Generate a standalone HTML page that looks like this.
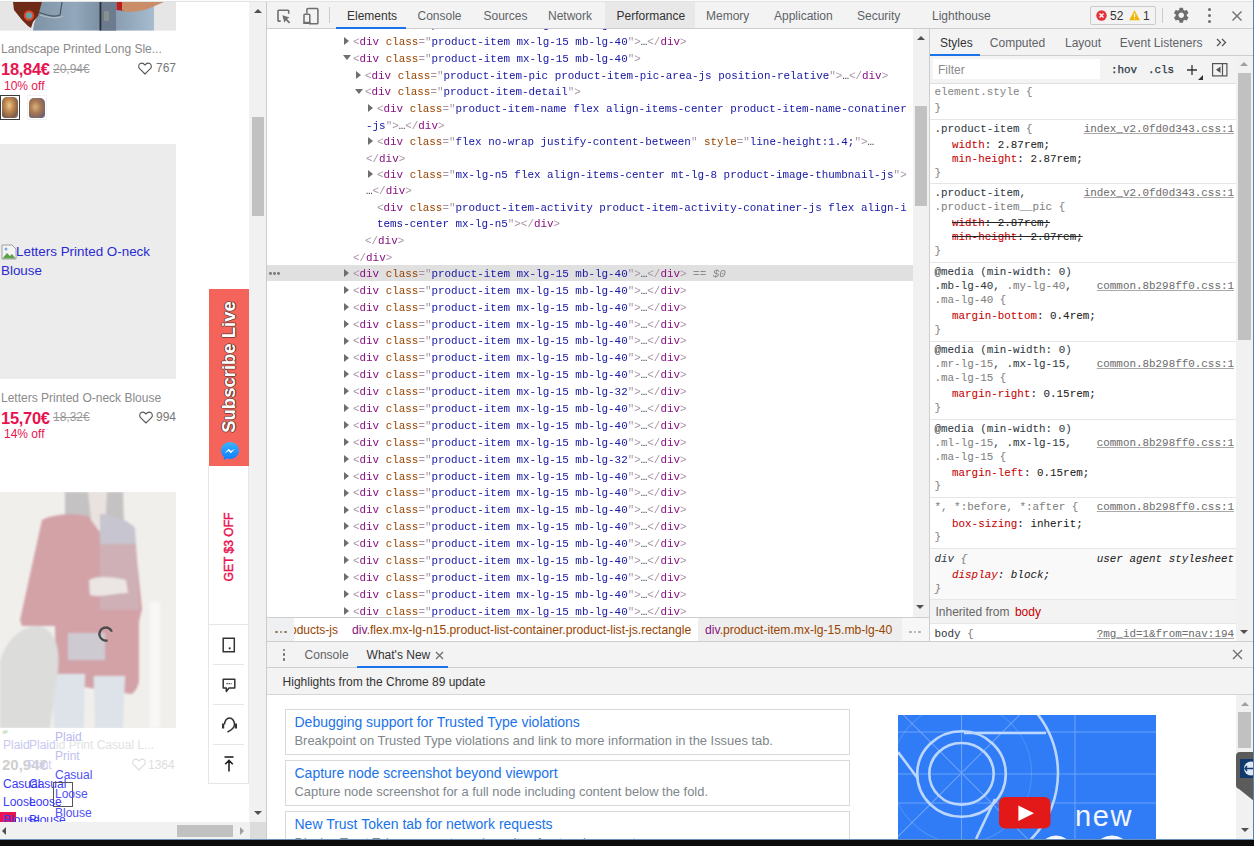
<!DOCTYPE html><html><head><meta charset="utf-8"><style>
html,body{margin:0;padding:0}
body{width:1254px;height:846px;overflow:hidden;position:relative;background:#fff;font-family:'Liberation Sans', sans-serif;}
.m{font-family:'Liberation Mono', monospace;font-size:10.9px;-webkit-text-stroke:0.05px currentColor}
.m .r, .m.r{font-size:11.4px;transform:scaleX(0.9566);transform-origin:0 50%;-webkit-text-stroke:0.02px currentColor}
.s{font-family:'Liberation Sans', sans-serif;}
.a{position:absolute;}
</style></head><body><div class="a" style="left:0;top:0;width:266px;height:846px;overflow:hidden;background:#fff"><svg class="a" style="left:0;top:2px" width="176" height="29" viewBox="0 0 176 29"><rect width="176" height="28.6" fill="#e6e6e6"/><defs><linearGradient id="jg" x1="0" x2="1"><stop offset="0" stop-color="#7f93a6"/><stop offset="0.35" stop-color="#93a8bc"/><stop offset="0.55" stop-color="#7d90a4"/><stop offset="1" stop-color="#a7bccf"/></linearGradient></defs><path d="M42 0 H154 V28.6 H33 L34 22 Z" fill="url(#jg)"/><path d="M38 10 C48 14 56 15 60 13 L62 0" fill="none" stroke="#4a5560" stroke-width="1.2"/><path d="M40 13 C50 16 58 17 63 14" fill="none" stroke="#c0ccd6" stroke-width="0.8"/><rect x="99.5" y="0" width="2" height="28.6" fill="#2a3038"/><rect x="102" y="0" width="14" height="28.6" fill="#6d7b8e"/><rect x="104" y="9" width="5" height="10" fill="#9aa08a" opacity="0.6"/><path d="M13 0 H42 L38 14 L33 20 L31 26 L28 24 L22 18 L14 8 Z" fill="#6e2a16"/><circle cx="29" cy="13.5" r="4.2" fill="#6aa0a8" stroke="#e0452a" stroke-width="2"/><path d="M116.5 0 H124.5 V9 L116.5 8 Z" fill="#b82020"/><path d="M122 0 H164 L150 6 C142 9 134 10 126 10 L122 8 Z" fill="#c98e68"/></svg><div style="position:absolute;left:1px;top:41.00px;line-height:16px;white-space:pre;font-size:12px;color:#8a8a8a">Landscape Printed Long Sle...</div><div style="position:absolute;left:1px;top:61.00px;line-height:16px;white-space:pre;font-size:16.5px;font-weight:bold;color:#e8134f;letter-spacing:-0.3px">18,84€</div><div style="position:absolute;left:53px;top:61.00px;line-height:16px;white-space:pre;font-size:12px;color:#9a9a9a;text-decoration:line-through">20,94€</div><div style="position:absolute;left:156px;top:60.00px;line-height:16px;white-space:pre;font-size:12px;color:#777">767</div><div style="position:absolute;left:4px;top:77.50px;line-height:16px;white-space:pre;font-size:12px;color:#e8134f">10% off</div><div style="position:absolute;left:0px;top:95px;width:20px;height:24.5px;border:1px solid #3a3a3a;box-sizing:border-box;background:#fff"></div><div style="position:absolute;left:2px;top:97px;width:16px;height:20.5px;border-radius:5px 5px 3px 3px;background:radial-gradient(ellipse at 45% 40%,#e8c890 0,#c08850 35%,#7a5a48 75%,#9aa0b8 100%)"></div><div style="position:absolute;left:27px;top:95px;width:20px;height:24.5px;border:1px solid #f2f2f2;box-sizing:border-box;background:#fff"></div><div style="position:absolute;left:29px;top:97.5px;width:16px;height:20px;border-radius:5px 5px 3px 3px;background:radial-gradient(ellipse at 40% 45%,#d8b080 0,#a87850 40%,#6e6070 80%,#b0a8c8 100%)"></div><div style="position:absolute;left:0px;top:144px;width:176px;height:235px;background:#ececec"></div><div style="position:absolute;left:16px;top:244.00px;line-height:16px;white-space:pre;font-size:13.4px;color:#2a2ad0">Letters Printed O-neck</div><div style="position:absolute;left:1px;top:263.00px;line-height:16px;white-space:pre;font-size:13.4px;color:#2a2ad0">Blouse</div><div style="position:absolute;left:1px;top:390.00px;line-height:16px;white-space:pre;font-size:12px;color:#8a8a8a">Letters Printed O-neck Blouse</div><div style="position:absolute;left:1px;top:409.50px;line-height:16px;white-space:pre;font-size:16.5px;font-weight:bold;color:#e8134f;letter-spacing:-0.3px">15,70€</div><div style="position:absolute;left:53px;top:409.00px;line-height:16px;white-space:pre;font-size:12px;color:#9a9a9a;text-decoration:line-through">18,32€</div><div style="position:absolute;left:156px;top:409.00px;line-height:16px;white-space:pre;font-size:12px;color:#777">994</div><div style="position:absolute;left:4px;top:425.50px;line-height:16px;white-space:pre;font-size:12px;color:#e8134f">14% off</div><div style="position:absolute;left:0px;top:492px;width:176px;height:236px;background:#eeeeec"></div><div style="position:absolute;left:209px;top:289px;width:40px;height:178px;background:#f4645a"></div><div style="position:absolute;left:208px;top:466px;width:41px;height:318px;background:#fff;border:1px solid #e6e6e6;border-top:none;box-sizing:border-box"></div><div style="position:absolute;left:209px;top:624px;width:40px;height:1px;background:#e6e6e6"></div><div style="position:absolute;left:213px;top:664px;width:31px;height:1px;background:#e6e6e6"></div><div style="position:absolute;left:213px;top:704px;width:31px;height:1px;background:#e6e6e6"></div><div style="position:absolute;left:213px;top:744px;width:31px;height:1px;background:#e6e6e6"></div><svg class="a" style="left:138px;top:62px" width="14" height="13" viewBox="0 0 14 13"><path d="M7 12 L1.6 6.6 C0.2 5.2 0.4 2.6 2.2 1.6 C3.8 0.7 5.6 1.2 7 3 C8.4 1.2 10.2 0.7 11.8 1.6 C13.6 2.6 13.8 5.2 12.4 6.6 Z" fill="none" stroke="#555" stroke-width="1.1"/></svg><svg class="a" style="left:138.5px;top:410.5px" width="14" height="13" viewBox="0 0 14 13"><path d="M7 12 L1.6 6.6 C0.2 5.2 0.4 2.6 2.2 1.6 C3.8 0.7 5.6 1.2 7 3 C8.4 1.2 10.2 0.7 11.8 1.6 C13.6 2.6 13.8 5.2 12.4 6.6 Z" fill="none" stroke="#555" stroke-width="1.1"/></svg><svg class="a" style="left:1px;top:244px" width="16" height="16" viewBox="0 0 16 16"><path d="M1 1 H11 L15 5 V15 H1 Z" fill="#f4f4f4" stroke="#a0a0a0" stroke-width="1"/><path d="M1.5 14.5 L6 9 L9 12 L11 10 L14.5 14.5 Z" fill="#5aa04a"/><circle cx="5" cy="5" r="1.5" fill="#7aaee0"/></svg><div class="a" style="left:228.8px;top:367px;width:0;height:0"><div style="position:absolute;left:-70px;top:-10px;width:140px;height:20px;line-height:20px;text-align:center;transform:rotate(-90deg);font-size:18.5px;font-weight:bold;color:#fff;white-space:pre;text-shadow:0.7px 0 0 #6a3a30,-0.7px 0 0 #6a3a30,0 0.7px 0 #6a3a30,0 -0.7px 0 #6a3a30">Subscribe Live</div></div><svg class="a" style="left:219.5px;top:440.5px" width="20" height="20" viewBox="0 0 20 20"><defs><linearGradient id="mg" x1="0" y1="1" x2="0" y2="0"><stop offset="0" stop-color="#0a7cff"/><stop offset="1" stop-color="#3cb4ff"/></linearGradient></defs><path d="M10 1 C4.9 1 1 4.8 1 9.6 C1 12.2 2.1 14.4 3.9 15.9 V19 L6.9 17.4 C7.9 17.7 8.9 17.9 10 17.9 C15.1 17.9 19 14.1 19 9.4 C19 4.7 15.1 1 10 1 Z" fill="url(#mg)"/><path d="M4.6 12.2 L8.8 7.7 L10.9 9.9 L15 7.7 L10.8 12.2 L8.7 10 Z" fill="#fff"/></svg><div class="a" style="left:229px;top:546.5px;width:0;height:0"><div style="position:absolute;left:-50px;top:-9px;width:100px;height:18px;line-height:18px;text-align:center;transform:rotate(-90deg);font-size:12.1px;color:#e8134f;white-space:pre;-webkit-text-stroke:0.45px #e8134f">GET $3 OFF</div></div><svg class="a" style="left:222px;top:636.5px" width="14" height="16" viewBox="0 0 14 16"><path d="M1.2 1.2 H12.3 V14.8 H1.2 Z" fill="none" stroke="#333" stroke-width="1.5"/><circle cx="7.7" cy="11.3" r="1.1" fill="#333"/></svg><svg class="a" style="left:222px;top:677.5px" width="14" height="15" viewBox="0 0 14 15"><path d="M1.2 1.2 H12.8 V10 H7 L4.3 13.5 V10 H1.2 Z" fill="none" stroke="#333" stroke-width="1.5" stroke-linejoin="round"/><path d="M4.5 5.6 H9.5" stroke="#333" stroke-width="1.2" stroke-dasharray="1.2 0.9"/></svg><svg class="a" style="left:220.5px;top:715.5px" width="17" height="17" viewBox="0 0 17 17"><path d="M3.5 8.5 C3.5 5 5.6 2 8.5 2 C11.4 2 13.5 5 13.5 8.5 C13.5 11.5 11.5 13.5 6.5 16" fill="none" stroke="#333" stroke-width="1.5"/><rect x="1" y="7.5" width="2.2" height="5" fill="#333"/><rect x="13.8" y="7.5" width="2.2" height="5" fill="#333"/></svg><svg class="a" style="left:223.5px;top:756px" width="10" height="16" viewBox="0 0 10 16"><path d="M0.5 1 H9.5" stroke="#222" stroke-width="1.6"/><path d="M5 15.5 V4.5 M1.2 8.3 L5 4.5 L8.8 8.3" fill="none" stroke="#222" stroke-width="1.6"/></svg><svg class="a" style="left:0;top:492px" width="176" height="236" viewBox="0 0 176 236"><defs><filter id="pb" x="-5%" y="-5%" width="110%" height="110%"><feGaussianBlur stdDeviation="1"/></filter></defs><rect width="176" height="236" fill="#f0efec"/><g filter="url(#pb)"><rect x="150" y="110" width="10" height="126" fill="#f7f7f6"/><path d="M65 0 H123 L124 30 L108 28 L90 28 L65 24 Z" fill="#c4c2c2"/><path d="M88 0 H107 L105 36 L92 36 Z" fill="#e9e2df"/><path d="M42 28 C50 23 70 20 88 24 L100 40 L106 23 C118 24 130 30 134 38 L142 117 L139 130 L139 190 C137 198 133 202 131 202 L90 196 L56 191 L55 134 L22 134 L20 128 Z" fill="#d3a2a7"/><path d="M100 22 C112 22 128 28 135 36 L136 52 L100 52 Z" fill="#c7c5cf"/><path d="M100 52 L136 52 L139 118 L100 118 Z" fill="#ceb0b6"/><path d="M68 141 H105 V168 H68 Z" fill="#cdcad1"/><path d="M89 88 C96 84 110 84 126 88 L128 101 C114 101 102 106 90 103 Z" fill="#ebe5e3"/><path d="M52.5 182 H85 L84 236 H54 Z M93.7 184 H125 L123 236 H95 Z" fill="#dde3e9"/><path d="M0 170 C6 148 20 134 40 134 C56 138 60 158 58 178 L50 236 H0 Z" fill="#dcdcdb"/></g></svg><svg class="a" style="left:96px;top:624px" width="20" height="20" viewBox="0 0 20 20"><path d="M15.9 7.6 A6.5 6.5 0 1 0 11.6 16.3" fill="none" stroke="#4a4a4a" stroke-width="2.3"/></svg><div class="a" style="left:0;top:727px;width:176px;height:95px;overflow:hidden;font-size:12px"><div style="position:absolute;left:2px;top:-3.00px;line-height:16px;white-space:pre;font-size:8px;color:#cfe3c4">▰</div><div style="position:absolute;left:3px;top:10.00px;line-height:16px;white-space:pre;color:#c9c9f0">Plaid</div><div style="position:absolute;left:29px;top:10.00px;line-height:16px;white-space:pre;color:#c9c9f0">Plaid</div><div style="position:absolute;left:56px;top:10.00px;line-height:16px;white-space:pre;color:#e2e2e2">id Print Casual L...</div><div style="position:absolute;left:55px;top:1.50px;line-height:16px;white-space:pre;color:#b8b8f0">Plaid</div><div style="position:absolute;left:55px;top:20.50px;line-height:16px;white-space:pre;color:#c0c0f0">Print</div><div style="position:absolute;left:2px;top:29.50px;line-height:16px;white-space:pre;font-size:15px;font-weight:bold;color:#cfcfcf">20,94€</div><div style="position:absolute;left:27px;top:29.50px;line-height:16px;white-space:pre;color:#d0d0f4">Print</div><svg class="a" style="left:132px;top:30.5px" width="14" height="13" viewBox="0 0 14 13"><path d="M7 12 L1.6 6.6 C0.2 5.2 0.4 2.6 2.2 1.6 C3.8 0.7 5.6 1.2 7 3 C8.4 1.2 10.2 0.7 11.8 1.6 C13.6 2.6 13.8 5.2 12.4 6.6 Z" fill="none" stroke="#dcdcdc" stroke-width="1.1"/></svg><div style="position:absolute;left:148px;top:29.50px;line-height:16px;white-space:pre;color:#dedede">1364</div><div style="position:absolute;left:55px;top:39.50px;line-height:16px;white-space:pre;color:#5050f5">Casual</div><div style="position:absolute;left:3px;top:48.50px;line-height:16px;white-space:pre;color:#3a3af5">Casual</div><div style="position:absolute;left:29px;top:48.50px;line-height:16px;white-space:pre;color:#3a3af5">Casual</div><div style="position:absolute;left:53px;top:55px;width:19.5px;height:25px;border:1px solid #555;box-sizing:border-box"></div><div style="position:absolute;left:55px;top:58.50px;line-height:16px;white-space:pre;color:#5050f5">Loose</div><div style="position:absolute;left:3px;top:67.00px;line-height:16px;white-space:pre;color:#3a3af5">Loose</div><div style="position:absolute;left:29px;top:67.00px;line-height:16px;white-space:pre;color:#3a3af5">Loose</div><div style="position:absolute;left:55px;top:77.50px;line-height:16px;white-space:pre;color:#5050f5">Blouse</div><div style="position:absolute;left:0px;top:84.5px;width:16px;height:11px;background:#e8134f"></div><div style="position:absolute;left:3px;top:85.00px;line-height:16px;white-space:pre;color:#3a3af5">Blouse</div><div style="position:absolute;left:29px;top:85.00px;line-height:16px;white-space:pre;color:#3a3af5">Blouse</div></div><div style="position:absolute;left:249px;top:0px;width:17px;height:846px;background:#f1f1f1"></div><div style="position:absolute;left:252px;top:117px;width:12px;height:99px;background:#c1c1c1"></div><div class="a" style="left:253.5px;top:8.7px;width:0;height:0;border-bottom:4.5px solid #505050;border-left:4.5px solid transparent;border-right:4.5px solid transparent"></div><div class="a" style="left:253.5px;top:811px;width:0;height:0;border-top:4.5px solid #505050;border-left:4.5px solid transparent;border-right:4.5px solid transparent"></div><div style="position:absolute;left:0px;top:822px;width:250px;height:17px;background:#f1f1f1"></div><div style="position:absolute;left:177px;top:824.5px;width:55.5px;height:12.3px;background:#c1c1c1"></div><div style="position:absolute;left:250px;top:822px;width:16px;height:17px;background:#dcdcdc"></div><div class="a" style="left:1.5px;top:826.5px;width:0;height:0;border-right:4.5px solid #505050;border-top:4.5px solid transparent;border-bottom:4.5px solid transparent"></div><div class="a" style="left:239.5px;top:826.5px;width:0;height:0;border-left:4.5px solid #a0a0a0;border-top:4.5px solid transparent;border-bottom:4.5px solid transparent"></div></div><div style="position:absolute;left:266px;top:0px;width:1px;height:846px;background:#cbcbcb"></div><div style="position:absolute;left:267px;top:0px;width:987px;height:28px;background:#f3f3f3"></div><div style="position:absolute;left:267px;top:28px;width:987px;height:1px;background:#cdcdcd"></div><div style="position:absolute;left:605px;top:0px;width:90px;height:28px;background:#e8e8e8"></div><div style="position:absolute;left:336px;top:27px;width:70px;height:2px;background:#1a73e8"></div><div style="position:absolute;left:347px;top:7.50px;line-height:16px;white-space:pre;font-size:12px;color:#333">Elements</div><div style="position:absolute;left:417.5px;top:7.50px;line-height:16px;white-space:pre;font-size:12px;color:#5f6368">Console</div><div style="position:absolute;left:483.5px;top:7.50px;line-height:16px;white-space:pre;font-size:12px;color:#5f6368">Sources</div><div style="position:absolute;left:548px;top:7.50px;line-height:16px;white-space:pre;font-size:12px;color:#5f6368">Network</div><div style="position:absolute;left:616.5px;top:7.50px;line-height:16px;white-space:pre;font-size:12px;color:#333">Performance</div><div style="position:absolute;left:706px;top:7.50px;line-height:16px;white-space:pre;font-size:12px;color:#5f6368">Memory</div><div style="position:absolute;left:774px;top:7.50px;line-height:16px;white-space:pre;font-size:12px;color:#5f6368">Application</div><div style="position:absolute;left:857px;top:7.50px;line-height:16px;white-space:pre;font-size:12px;color:#5f6368">Security</div><div style="position:absolute;left:932px;top:7.50px;line-height:16px;white-space:pre;font-size:12px;color:#5f6368">Lighthouse</div><div style="position:absolute;left:267px;top:29px;width:646px;height:588px;background:#fff"></div><div class="a m" style="left:267px;top:29px;width:646px;height:588px;overflow:hidden"><div style="position:absolute;left:0px;top:236.0px;width:646px;height:16.4px;background:#e0e0e0"></div><div class="a" style="left:2.1px;top:243.1px;width:2.8px;height:2.8px;border-radius:50%;background:#7a7a7a"></div><div class="a" style="left:6.1px;top:243.1px;width:2.8px;height:2.8px;border-radius:50%;background:#7a7a7a"></div><div class="a" style="left:10.1px;top:243.1px;width:2.8px;height:2.8px;border-radius:50%;background:#7a7a7a"></div><div class="r" style="position:absolute;left:85.90px;top:-11.80px;line-height:16px;white-space:pre"><span style="color:#a894a6;">&lt;</span><span style="color:#881280;">div</span> <span style="color:#994500;">class</span><span style="color:#a894a6;">=&quot;</span><span style="color:#1a1aa6;">product-item mx-lg-15 mb-lg-40</span><span style="color:#a894a6;">&quot;</span><span style="color:#a894a6;">&gt;</span><span style="color:#303942;">…</span><span style="color:#a894a6;">&lt;/</span><span style="color:#881280;">div</span><span style="color:#a894a6;">&gt;</span></div><div class="a" style="left:76.8px;top:7.9px;width:0;height:0;border-left:5.5px solid #6e6e6e;border-top:4.5px solid transparent;border-bottom:4.5px solid transparent"></div><div class="r" style="position:absolute;left:85.90px;top:4.70px;line-height:16px;white-space:pre"><span style="color:#a894a6;">&lt;</span><span style="color:#881280;">div</span> <span style="color:#994500;">class</span><span style="color:#a894a6;">=&quot;</span><span style="color:#1a1aa6;">product-item mx-lg-15 mb-lg-40</span><span style="color:#a894a6;">&quot;</span><span style="color:#a894a6;">&gt;</span><span style="color:#303942;">…</span><span style="color:#a894a6;">&lt;/</span><span style="color:#881280;">div</span><span style="color:#a894a6;">&gt;</span></div><div class="a" style="left:76.0px;top:26.4px;width:0;height:0;border-top:5.5px solid #6e6e6e;border-left:4.5px solid transparent;border-right:4.5px solid transparent"></div><div class="r" style="position:absolute;left:85.90px;top:21.70px;line-height:16px;white-space:pre"><span style="color:#a894a6;">&lt;</span><span style="color:#881280;">div</span> <span style="color:#994500;">class</span><span style="color:#a894a6;">=&quot;</span><span style="color:#1a1aa6;">product-item mx-lg-15 mb-lg-40</span><span style="color:#a894a6;">&quot;</span><span style="color:#a894a6;">&gt;</span></div><div class="a" style="left:88.8px;top:41.7px;width:0;height:0;border-left:5.5px solid #6e6e6e;border-top:4.5px solid transparent;border-bottom:4.5px solid transparent"></div><div class="r" style="position:absolute;left:97.90px;top:38.50px;line-height:16px;white-space:pre"><span style="color:#a894a6;">&lt;</span><span style="color:#881280;">div</span> <span style="color:#994500;">class</span><span style="color:#a894a6;">=&quot;</span><span style="color:#1a1aa6;">product-item-pic product-item-pic-area-js position-relative</span><span style="color:#a894a6;">&quot;</span><span style="color:#a894a6;">&gt;</span><span style="color:#303942;">…</span><span style="color:#a894a6;">&lt;/</span><span style="color:#881280;">div</span><span style="color:#a894a6;">&gt;</span></div><div class="a" style="left:88.0px;top:59.9px;width:0;height:0;border-top:5.5px solid #6e6e6e;border-left:4.5px solid transparent;border-right:4.5px solid transparent"></div><div class="r" style="position:absolute;left:97.90px;top:55.20px;line-height:16px;white-space:pre"><span style="color:#a894a6;">&lt;</span><span style="color:#881280;">div</span> <span style="color:#994500;">class</span><span style="color:#a894a6;">=&quot;</span><span style="color:#1a1aa6;">product-item-detail</span><span style="color:#a894a6;">&quot;</span><span style="color:#a894a6;">&gt;</span></div><div class="a" style="left:100.8px;top:75.1px;width:0;height:0;border-left:5.5px solid #6e6e6e;border-top:4.5px solid transparent;border-bottom:4.5px solid transparent"></div><div class="r" style="position:absolute;left:109.90px;top:71.90px;line-height:16px;white-space:pre"><span style="color:#a894a6;">&lt;</span><span style="color:#881280;">div</span> <span style="color:#994500;">class</span><span style="color:#a894a6;">=&quot;</span><span style="color:#1a1aa6;">product-item-name flex align-items-center product-item-name-conatiner</span></div><div class="r" style="position:absolute;left:98.50px;top:88.60px;line-height:16px;white-space:pre"><span style="color:#1a1aa6;">-js</span><span style="color:#a894a6;">&quot;&gt;</span><span style="color:#303942;">…</span><span style="color:#a894a6;">&lt;/</span><span style="color:#881280;">div</span><span style="color:#a894a6;">&gt;</span></div><div class="a" style="left:100.8px;top:108.2px;width:0;height:0;border-left:5.5px solid #6e6e6e;border-top:4.5px solid transparent;border-bottom:4.5px solid transparent"></div><div class="r" style="position:absolute;left:109.90px;top:105.00px;line-height:16px;white-space:pre"><span style="color:#a894a6;">&lt;</span><span style="color:#881280;">div</span> <span style="color:#994500;">class</span><span style="color:#a894a6;">=&quot;</span><span style="color:#1a1aa6;">flex no-wrap justify-content-between</span><span style="color:#a894a6;">&quot;</span> <span style="color:#994500;">style</span><span style="color:#a894a6;">=&quot;</span><span style="color:#1a1aa6;">line-height:1.4;</span><span style="color:#a894a6;">&quot;</span><span style="color:#a894a6;">&gt;</span><span style="color:#303942;">…</span></div><div class="r" style="position:absolute;left:98.50px;top:121.50px;line-height:16px;white-space:pre"><span style="color:#a894a6;">&lt;/</span><span style="color:#881280;">div</span><span style="color:#a894a6;">&gt;</span></div><div class="a" style="left:100.8px;top:141.1px;width:0;height:0;border-left:5.5px solid #6e6e6e;border-top:4.5px solid transparent;border-bottom:4.5px solid transparent"></div><div class="r" style="position:absolute;left:109.90px;top:137.90px;line-height:16px;white-space:pre"><span style="color:#a894a6;">&lt;</span><span style="color:#881280;">div</span> <span style="color:#994500;">class</span><span style="color:#a894a6;">=&quot;</span><span style="color:#1a1aa6;">mx-lg-n5 flex align-items-center mt-lg-8 product-image-thumbnail-js</span><span style="color:#a894a6;">&quot;</span><span style="color:#a894a6;">&gt;</span></div><div class="r" style="position:absolute;left:98.50px;top:154.30px;line-height:16px;white-space:pre"><span style="color:#303942;">…</span><span style="color:#a894a6;">&lt;/</span><span style="color:#881280;">div</span><span style="color:#a894a6;">&gt;</span></div><div class="r" style="position:absolute;left:109.90px;top:170.90px;line-height:16px;white-space:pre"><span style="color:#a894a6;">&lt;</span><span style="color:#881280;">div</span> <span style="color:#994500;">class</span><span style="color:#a894a6;">=&quot;</span><span style="color:#1a1aa6;">product-item-activity product-item-activity-conatiner-js flex align-i</span></div><div class="r" style="position:absolute;left:110.40px;top:187.10px;line-height:16px;white-space:pre"><span style="color:#1a1aa6;">tems-center mx-lg-n5</span><span style="color:#a894a6;">&quot;&gt;</span><span style="color:#a894a6;">&lt;/</span><span style="color:#881280;">div</span><span style="color:#a894a6;">&gt;</span></div><div class="r" style="position:absolute;left:97.90px;top:203.70px;line-height:16px;white-space:pre"><span style="color:#a894a6;">&lt;/</span><span style="color:#881280;">div</span><span style="color:#a894a6;">&gt;</span></div><div class="r" style="position:absolute;left:85.90px;top:220.50px;line-height:16px;white-space:pre"><span style="color:#a894a6;">&lt;/</span><span style="color:#881280;">div</span><span style="color:#a894a6;">&gt;</span></div><div class="a" style="left:76.8px;top:240.1px;width:0;height:0;border-left:5.5px solid #6e6e6e;border-top:4.5px solid transparent;border-bottom:4.5px solid transparent"></div><div class="r" style="position:absolute;left:85.90px;top:236.90px;line-height:16px;white-space:pre"><span style="color:#a894a6;">&lt;</span><span style="color:#881280;">div</span> <span style="color:#994500;">class</span><span style="color:#a894a6;">=&quot;</span><span style="color:#1a1aa6;">product-item mx-lg-15 mb-lg-40</span><span style="color:#a894a6;">&quot;</span><span style="color:#a894a6;">&gt;</span><span style="color:#303942;">…</span><span style="color:#a894a6;">&lt;/</span><span style="color:#881280;">div</span><span style="color:#a894a6;">&gt;</span> <span style="color:#8a8a8a;font-style:italic">== $0</span></div><div class="a" style="left:76.8px;top:257.0px;width:0;height:0;border-left:5.5px solid #6e6e6e;border-top:4.5px solid transparent;border-bottom:4.5px solid transparent"></div><div class="r" style="position:absolute;left:85.90px;top:253.78px;line-height:16px;white-space:pre"><span style="color:#a894a6;">&lt;</span><span style="color:#881280;">div</span> <span style="color:#994500;">class</span><span style="color:#a894a6;">=&quot;</span><span style="color:#1a1aa6;">product-item mx-lg-15 mb-lg-40</span><span style="color:#a894a6;">&quot;</span><span style="color:#a894a6;">&gt;</span><span style="color:#303942;">…</span><span style="color:#a894a6;">&lt;/</span><span style="color:#881280;">div</span><span style="color:#a894a6;">&gt;</span></div><div class="a" style="left:76.8px;top:273.9px;width:0;height:0;border-left:5.5px solid #6e6e6e;border-top:4.5px solid transparent;border-bottom:4.5px solid transparent"></div><div class="r" style="position:absolute;left:85.90px;top:270.67px;line-height:16px;white-space:pre"><span style="color:#a894a6;">&lt;</span><span style="color:#881280;">div</span> <span style="color:#994500;">class</span><span style="color:#a894a6;">=&quot;</span><span style="color:#1a1aa6;">product-item mx-lg-15 mb-lg-40</span><span style="color:#a894a6;">&quot;</span><span style="color:#a894a6;">&gt;</span><span style="color:#303942;">…</span><span style="color:#a894a6;">&lt;/</span><span style="color:#881280;">div</span><span style="color:#a894a6;">&gt;</span></div><div class="a" style="left:76.8px;top:290.8px;width:0;height:0;border-left:5.5px solid #6e6e6e;border-top:4.5px solid transparent;border-bottom:4.5px solid transparent"></div><div class="r" style="position:absolute;left:85.90px;top:287.56px;line-height:16px;white-space:pre"><span style="color:#a894a6;">&lt;</span><span style="color:#881280;">div</span> <span style="color:#994500;">class</span><span style="color:#a894a6;">=&quot;</span><span style="color:#1a1aa6;">product-item mx-lg-15 mb-lg-40</span><span style="color:#a894a6;">&quot;</span><span style="color:#a894a6;">&gt;</span><span style="color:#303942;">…</span><span style="color:#a894a6;">&lt;/</span><span style="color:#881280;">div</span><span style="color:#a894a6;">&gt;</span></div><div class="a" style="left:76.8px;top:307.6px;width:0;height:0;border-left:5.5px solid #6e6e6e;border-top:4.5px solid transparent;border-bottom:4.5px solid transparent"></div><div class="r" style="position:absolute;left:85.90px;top:304.44px;line-height:16px;white-space:pre"><span style="color:#a894a6;">&lt;</span><span style="color:#881280;">div</span> <span style="color:#994500;">class</span><span style="color:#a894a6;">=&quot;</span><span style="color:#1a1aa6;">product-item mx-lg-15 mb-lg-40</span><span style="color:#a894a6;">&quot;</span><span style="color:#a894a6;">&gt;</span><span style="color:#303942;">…</span><span style="color:#a894a6;">&lt;/</span><span style="color:#881280;">div</span><span style="color:#a894a6;">&gt;</span></div><div class="a" style="left:76.8px;top:324.5px;width:0;height:0;border-left:5.5px solid #6e6e6e;border-top:4.5px solid transparent;border-bottom:4.5px solid transparent"></div><div class="r" style="position:absolute;left:85.90px;top:321.32px;line-height:16px;white-space:pre"><span style="color:#a894a6;">&lt;</span><span style="color:#881280;">div</span> <span style="color:#994500;">class</span><span style="color:#a894a6;">=&quot;</span><span style="color:#1a1aa6;">product-item mx-lg-15 mb-lg-40</span><span style="color:#a894a6;">&quot;</span><span style="color:#a894a6;">&gt;</span><span style="color:#303942;">…</span><span style="color:#a894a6;">&lt;/</span><span style="color:#881280;">div</span><span style="color:#a894a6;">&gt;</span></div><div class="a" style="left:76.8px;top:341.4px;width:0;height:0;border-left:5.5px solid #6e6e6e;border-top:4.5px solid transparent;border-bottom:4.5px solid transparent"></div><div class="r" style="position:absolute;left:85.90px;top:338.21px;line-height:16px;white-space:pre"><span style="color:#a894a6;">&lt;</span><span style="color:#881280;">div</span> <span style="color:#994500;">class</span><span style="color:#a894a6;">=&quot;</span><span style="color:#1a1aa6;">product-item mx-lg-15 mb-lg-40</span><span style="color:#a894a6;">&quot;</span><span style="color:#a894a6;">&gt;</span><span style="color:#303942;">…</span><span style="color:#a894a6;">&lt;/</span><span style="color:#881280;">div</span><span style="color:#a894a6;">&gt;</span></div><div class="a" style="left:76.8px;top:358.3px;width:0;height:0;border-left:5.5px solid #6e6e6e;border-top:4.5px solid transparent;border-bottom:4.5px solid transparent"></div><div class="r" style="position:absolute;left:85.90px;top:355.09px;line-height:16px;white-space:pre"><span style="color:#a894a6;">&lt;</span><span style="color:#881280;">div</span> <span style="color:#994500;">class</span><span style="color:#a894a6;">=&quot;</span><span style="color:#1a1aa6;">product-item mx-lg-15 mb-lg-32</span><span style="color:#a894a6;">&quot;</span><span style="color:#a894a6;">&gt;</span><span style="color:#303942;">…</span><span style="color:#a894a6;">&lt;/</span><span style="color:#881280;">div</span><span style="color:#a894a6;">&gt;</span></div><div class="a" style="left:76.8px;top:375.2px;width:0;height:0;border-left:5.5px solid #6e6e6e;border-top:4.5px solid transparent;border-bottom:4.5px solid transparent"></div><div class="r" style="position:absolute;left:85.90px;top:371.98px;line-height:16px;white-space:pre"><span style="color:#a894a6;">&lt;</span><span style="color:#881280;">div</span> <span style="color:#994500;">class</span><span style="color:#a894a6;">=&quot;</span><span style="color:#1a1aa6;">product-item mx-lg-15 mb-lg-40</span><span style="color:#a894a6;">&quot;</span><span style="color:#a894a6;">&gt;</span><span style="color:#303942;">…</span><span style="color:#a894a6;">&lt;/</span><span style="color:#881280;">div</span><span style="color:#a894a6;">&gt;</span></div><div class="a" style="left:76.8px;top:392.1px;width:0;height:0;border-left:5.5px solid #6e6e6e;border-top:4.5px solid transparent;border-bottom:4.5px solid transparent"></div><div class="r" style="position:absolute;left:85.90px;top:388.86px;line-height:16px;white-space:pre"><span style="color:#a894a6;">&lt;</span><span style="color:#881280;">div</span> <span style="color:#994500;">class</span><span style="color:#a894a6;">=&quot;</span><span style="color:#1a1aa6;">product-item mx-lg-15 mb-lg-40</span><span style="color:#a894a6;">&quot;</span><span style="color:#a894a6;">&gt;</span><span style="color:#303942;">…</span><span style="color:#a894a6;">&lt;/</span><span style="color:#881280;">div</span><span style="color:#a894a6;">&gt;</span></div><div class="a" style="left:76.8px;top:408.9px;width:0;height:0;border-left:5.5px solid #6e6e6e;border-top:4.5px solid transparent;border-bottom:4.5px solid transparent"></div><div class="r" style="position:absolute;left:85.90px;top:405.75px;line-height:16px;white-space:pre"><span style="color:#a894a6;">&lt;</span><span style="color:#881280;">div</span> <span style="color:#994500;">class</span><span style="color:#a894a6;">=&quot;</span><span style="color:#1a1aa6;">product-item mx-lg-15 mb-lg-40</span><span style="color:#a894a6;">&quot;</span><span style="color:#a894a6;">&gt;</span><span style="color:#303942;">…</span><span style="color:#a894a6;">&lt;/</span><span style="color:#881280;">div</span><span style="color:#a894a6;">&gt;</span></div><div class="a" style="left:76.8px;top:425.8px;width:0;height:0;border-left:5.5px solid #6e6e6e;border-top:4.5px solid transparent;border-bottom:4.5px solid transparent"></div><div class="r" style="position:absolute;left:85.90px;top:422.63px;line-height:16px;white-space:pre"><span style="color:#a894a6;">&lt;</span><span style="color:#881280;">div</span> <span style="color:#994500;">class</span><span style="color:#a894a6;">=&quot;</span><span style="color:#1a1aa6;">product-item mx-lg-15 mb-lg-32</span><span style="color:#a894a6;">&quot;</span><span style="color:#a894a6;">&gt;</span><span style="color:#303942;">…</span><span style="color:#a894a6;">&lt;/</span><span style="color:#881280;">div</span><span style="color:#a894a6;">&gt;</span></div><div class="a" style="left:76.8px;top:442.7px;width:0;height:0;border-left:5.5px solid #6e6e6e;border-top:4.5px solid transparent;border-bottom:4.5px solid transparent"></div><div class="r" style="position:absolute;left:85.90px;top:439.52px;line-height:16px;white-space:pre"><span style="color:#a894a6;">&lt;</span><span style="color:#881280;">div</span> <span style="color:#994500;">class</span><span style="color:#a894a6;">=&quot;</span><span style="color:#1a1aa6;">product-item mx-lg-15 mb-lg-40</span><span style="color:#a894a6;">&quot;</span><span style="color:#a894a6;">&gt;</span><span style="color:#303942;">…</span><span style="color:#a894a6;">&lt;/</span><span style="color:#881280;">div</span><span style="color:#a894a6;">&gt;</span></div><div class="a" style="left:76.8px;top:459.6px;width:0;height:0;border-left:5.5px solid #6e6e6e;border-top:4.5px solid transparent;border-bottom:4.5px solid transparent"></div><div class="r" style="position:absolute;left:85.90px;top:456.41px;line-height:16px;white-space:pre"><span style="color:#a894a6;">&lt;</span><span style="color:#881280;">div</span> <span style="color:#994500;">class</span><span style="color:#a894a6;">=&quot;</span><span style="color:#1a1aa6;">product-item mx-lg-15 mb-lg-40</span><span style="color:#a894a6;">&quot;</span><span style="color:#a894a6;">&gt;</span><span style="color:#303942;">…</span><span style="color:#a894a6;">&lt;/</span><span style="color:#881280;">div</span><span style="color:#a894a6;">&gt;</span></div><div class="a" style="left:76.8px;top:476.5px;width:0;height:0;border-left:5.5px solid #6e6e6e;border-top:4.5px solid transparent;border-bottom:4.5px solid transparent"></div><div class="r" style="position:absolute;left:85.90px;top:473.29px;line-height:16px;white-space:pre"><span style="color:#a894a6;">&lt;</span><span style="color:#881280;">div</span> <span style="color:#994500;">class</span><span style="color:#a894a6;">=&quot;</span><span style="color:#1a1aa6;">product-item mx-lg-15 mb-lg-40</span><span style="color:#a894a6;">&quot;</span><span style="color:#a894a6;">&gt;</span><span style="color:#303942;">…</span><span style="color:#a894a6;">&lt;/</span><span style="color:#881280;">div</span><span style="color:#a894a6;">&gt;</span></div><div class="a" style="left:76.8px;top:493.4px;width:0;height:0;border-left:5.5px solid #6e6e6e;border-top:4.5px solid transparent;border-bottom:4.5px solid transparent"></div><div class="r" style="position:absolute;left:85.90px;top:490.18px;line-height:16px;white-space:pre"><span style="color:#a894a6;">&lt;</span><span style="color:#881280;">div</span> <span style="color:#994500;">class</span><span style="color:#a894a6;">=&quot;</span><span style="color:#1a1aa6;">product-item mx-lg-15 mb-lg-40</span><span style="color:#a894a6;">&quot;</span><span style="color:#a894a6;">&gt;</span><span style="color:#303942;">…</span><span style="color:#a894a6;">&lt;/</span><span style="color:#881280;">div</span><span style="color:#a894a6;">&gt;</span></div><div class="a" style="left:76.8px;top:510.3px;width:0;height:0;border-left:5.5px solid #6e6e6e;border-top:4.5px solid transparent;border-bottom:4.5px solid transparent"></div><div class="r" style="position:absolute;left:85.90px;top:507.06px;line-height:16px;white-space:pre"><span style="color:#a894a6;">&lt;</span><span style="color:#881280;">div</span> <span style="color:#994500;">class</span><span style="color:#a894a6;">=&quot;</span><span style="color:#1a1aa6;">product-item mx-lg-15 mb-lg-40</span><span style="color:#a894a6;">&quot;</span><span style="color:#a894a6;">&gt;</span><span style="color:#303942;">…</span><span style="color:#a894a6;">&lt;/</span><span style="color:#881280;">div</span><span style="color:#a894a6;">&gt;</span></div><div class="a" style="left:76.8px;top:527.1px;width:0;height:0;border-left:5.5px solid #6e6e6e;border-top:4.5px solid transparent;border-bottom:4.5px solid transparent"></div><div class="r" style="position:absolute;left:85.90px;top:523.95px;line-height:16px;white-space:pre"><span style="color:#a894a6;">&lt;</span><span style="color:#881280;">div</span> <span style="color:#994500;">class</span><span style="color:#a894a6;">=&quot;</span><span style="color:#1a1aa6;">product-item mx-lg-15 mb-lg-40</span><span style="color:#a894a6;">&quot;</span><span style="color:#a894a6;">&gt;</span><span style="color:#303942;">…</span><span style="color:#a894a6;">&lt;/</span><span style="color:#881280;">div</span><span style="color:#a894a6;">&gt;</span></div><div class="a" style="left:76.8px;top:544.0px;width:0;height:0;border-left:5.5px solid #6e6e6e;border-top:4.5px solid transparent;border-bottom:4.5px solid transparent"></div><div class="r" style="position:absolute;left:85.90px;top:540.83px;line-height:16px;white-space:pre"><span style="color:#a894a6;">&lt;</span><span style="color:#881280;">div</span> <span style="color:#994500;">class</span><span style="color:#a894a6;">=&quot;</span><span style="color:#1a1aa6;">product-item mx-lg-15 mb-lg-40</span><span style="color:#a894a6;">&quot;</span><span style="color:#a894a6;">&gt;</span><span style="color:#303942;">…</span><span style="color:#a894a6;">&lt;/</span><span style="color:#881280;">div</span><span style="color:#a894a6;">&gt;</span></div><div class="a" style="left:76.8px;top:560.9px;width:0;height:0;border-left:5.5px solid #6e6e6e;border-top:4.5px solid transparent;border-bottom:4.5px solid transparent"></div><div class="r" style="position:absolute;left:85.90px;top:557.72px;line-height:16px;white-space:pre"><span style="color:#a894a6;">&lt;</span><span style="color:#881280;">div</span> <span style="color:#994500;">class</span><span style="color:#a894a6;">=&quot;</span><span style="color:#1a1aa6;">product-item mx-lg-15 mb-lg-40</span><span style="color:#a894a6;">&quot;</span><span style="color:#a894a6;">&gt;</span><span style="color:#303942;">…</span><span style="color:#a894a6;">&lt;/</span><span style="color:#881280;">div</span><span style="color:#a894a6;">&gt;</span></div><div class="a" style="left:76.8px;top:577.8px;width:0;height:0;border-left:5.5px solid #6e6e6e;border-top:4.5px solid transparent;border-bottom:4.5px solid transparent"></div><div class="r" style="position:absolute;left:85.90px;top:574.60px;line-height:16px;white-space:pre"><span style="color:#a894a6;">&lt;</span><span style="color:#881280;">div</span> <span style="color:#994500;">class</span><span style="color:#a894a6;">=&quot;</span><span style="color:#1a1aa6;">product-item mx-lg-15 mb-lg-40</span><span style="color:#a894a6;">&quot;</span><span style="color:#a894a6;">&gt;</span><span style="color:#303942;">…</span><span style="color:#a894a6;">&lt;/</span><span style="color:#881280;">div</span><span style="color:#a894a6;">&gt;</span></div></div><div style="position:absolute;left:913px;top:29px;width:16px;height:588px;background:#f1f1f1"></div><div style="position:absolute;left:914.5px;top:106px;width:12.5px;height:99.5px;background:#c1c1c1"></div><div class="a" style="left:917px;top:36px;width:0;height:0;border-bottom:4px solid #505050;border-left:4px solid transparent;border-right:4px solid transparent"></div><div class="a" style="left:916px;top:605px;width:0;height:0;border-top:4px solid #505050;border-left:4px solid transparent;border-right:4px solid transparent"></div><div style="position:absolute;left:929px;top:29px;width:1px;height:612px;background:#cdcdcd"></div><div style="position:absolute;left:267px;top:617px;width:662px;height:1px;background:#cdcdcd"></div><div style="position:absolute;left:267px;top:618px;width:662px;height:23px;background:#fff"></div><div style="position:absolute;left:267px;top:618px;width:27px;height:23px;background:#eef0f2"></div><div class="a" style="left:275.3px;top:631px;width:2.4px;height:2.4px;border-radius:50%;background:#8a7a6a"></div><div class="a" style="left:279.8px;top:631px;width:2.4px;height:2.4px;border-radius:50%;background:#8a7a6a"></div><div class="a" style="left:284.3px;top:631px;width:2.4px;height:2.4px;border-radius:50%;background:#8a7a6a"></div><div class="a" style="left:294px;top:618px;width:50px;height:23px;overflow:hidden"><div style="position:absolute;left:-4px;top:4px;line-height:16px;font-size:12px;color:#994500;white-space:pre">oducts-js</div></div><div style="position:absolute;left:352px;top:622.00px;line-height:16px;white-space:pre;font-size:12.15px"><span style="color:#881280;">div</span><span style="color:#994500;">.flex.mx-lg-n15.product-list-container.product-list-js.rectangle</span></div><div style="position:absolute;left:698px;top:618px;width:204px;height:23px;background:#eeeeee"></div><div style="position:absolute;left:705px;top:622.00px;line-height:16px;white-space:pre;font-size:12.15px"><span style="color:#881280;">div</span><span style="color:#994500;">.product-item.mx-lg-15.mb-lg-40</span></div><div style="position:absolute;left:902px;top:618px;width:27px;height:23px;background:#f7f7f7"></div><div class="a" style="left:909.3px;top:631px;width:2.4px;height:2.4px;border-radius:50%;background:#aaa"></div><div class="a" style="left:913.8px;top:631px;width:2.4px;height:2.4px;border-radius:50%;background:#aaa"></div><div class="a" style="left:918.3px;top:631px;width:2.4px;height:2.4px;border-radius:50%;background:#aaa"></div><div style="position:absolute;left:930px;top:29px;width:324px;height:612px;background:#fff"></div><div style="position:absolute;left:930px;top:29px;width:324px;height:26px;background:#f3f3f3"></div><div style="position:absolute;left:930px;top:55px;width:324px;height:1px;background:#cdcdcd"></div><div style="position:absolute;left:930px;top:54px;width:50px;height:2px;background:#1a73e8"></div><div style="position:absolute;left:940px;top:34.50px;line-height:16px;white-space:pre;font-size:12px;color:#333">Styles</div><div style="position:absolute;left:989.8px;top:34.50px;line-height:16px;white-space:pre;font-size:12px;color:#5f6368">Computed</div><div style="position:absolute;left:1065px;top:34.50px;line-height:16px;white-space:pre;font-size:12px;color:#5f6368">Layout</div><div style="position:absolute;left:1119.8px;top:34.50px;line-height:16px;white-space:pre;font-size:12px;color:#5f6368">Event Listeners</div><svg class="a" style="left:1216px;top:38px" width="11" height="9" viewBox="0 0 11 9"><path d="M1 1 L4.5 4.5 L1 8 M6 1 L9.5 4.5 L6 8" fill="none" stroke="#555" stroke-width="1.3"/></svg><div style="position:absolute;left:930px;top:56px;width:306px;height:27px;background:#f3f3f3"></div><div style="position:absolute;left:933px;top:59px;width:167px;height:20px;background:#fff"></div><div style="position:absolute;left:938px;top:61.50px;line-height:16px;white-space:pre;font-size:12px;color:#8a8a8a">Filter</div><div class="a m" style="left:1111px;top:61.5px;line-height:16px;color:#2a3642;white-space:pre;-webkit-text-stroke:0.25px #2a3642">:hov</div><div class="a m" style="left:1148px;top:61.5px;line-height:16px;color:#2a3642;white-space:pre;-webkit-text-stroke:0.25px #2a3642">.cls</div><svg class="a" style="left:1186px;top:63.5px" width="18" height="16" viewBox="0 0 18 16"><path d="M6 1 V11 M1 6 H11" stroke="#333" stroke-width="1.3"/><path d="M17 11 V16 H12 Z" fill="#333"/></svg><svg class="a" style="left:1212px;top:63px" width="15.5" height="13.5" viewBox="0 0 15.5 13.5"><rect x="0.6" y="0.6" width="14.3" height="12.3" fill="none" stroke="#555" stroke-width="1.2"/><path d="M10.5 0.6 V12.9" stroke="#555" stroke-width="1.2"/><path d="M8.5 3.5 V10 L4 6.75 Z" fill="#555"/></svg><div style="position:absolute;left:930px;top:83px;width:306px;height:1px;background:#e0e0e0"></div><div class="a m" style="left:934.5px;top:84.40px;line-height:16px;white-space:pre;"><span style="color:#888;">element.style </span><span style="color:#808080;">{</span></div><div class="a m" style="left:934.5px;top:100.40px;line-height:16px;white-space:pre;"><span style="color:#808080;">}</span></div><div style="position:absolute;left:930px;top:119px;width:306px;height:1px;background:#e6e6e6"></div><div class="a m" style="left:934.5px;top:120.90px;line-height:16px;white-space:pre;"><span style="color:#303942;">.product-item </span><span style="color:#808080;">{</span></div><div class="a m" style="right:20px;top:120.90px;line-height:16px;white-space:pre;color:#6e6e6e;text-decoration:underline;text-decoration-color:#a8a8a8">index_v2.0fd0d343.css:1</div><div class="a m" style="left:952px;top:137.10px;line-height:16px;white-space:pre;"><span style="color:#c80000;">width</span><span style="color:#222;">: 2.87rem;</span></div><div class="a m" style="left:952px;top:151.40px;line-height:16px;white-space:pre;"><span style="color:#c80000;">min-height</span><span style="color:#222;">: 2.87rem;</span></div><div class="a m" style="left:934.5px;top:164.70px;line-height:16px;white-space:pre;"><span style="color:#808080;">}</span></div><div style="position:absolute;left:930px;top:183px;width:306px;height:1px;background:#e6e6e6"></div><div class="a m" style="left:934.5px;top:185.00px;line-height:16px;white-space:pre;"><span style="color:#303942;">.product-item,</span></div><div class="a m" style="right:20px;top:185.00px;line-height:16px;white-space:pre;color:#6e6e6e;text-decoration:underline;text-decoration-color:#a8a8a8">index_v2.0fd0d343.css:1</div><div class="a m" style="left:934.5px;top:199.30px;line-height:16px;white-space:pre;"><span style="color:#808080;">.product-item__pic {</span></div><div class="a m" style="left:952px;top:215.40px;line-height:16px;white-space:pre;text-decoration:line-through;color:#222"><span style="color:#c80000;">width</span><span style="color:#222;">: 2.87rem;</span></div><div class="a m" style="left:952px;top:229.40px;line-height:16px;white-space:pre;text-decoration:line-through;color:#222"><span style="color:#c80000;">min-height</span><span style="color:#222;">: 2.87rem;</span></div><div class="a m" style="left:934.5px;top:242.80px;line-height:16px;white-space:pre;"><span style="color:#808080;">}</span></div><div style="position:absolute;left:930px;top:262px;width:306px;height:1px;background:#e6e6e6"></div><div class="a m" style="left:934.5px;top:263.80px;line-height:16px;white-space:pre;"><span style="color:#303942;">@media (min-width: 0)</span></div><div class="a m" style="left:934.5px;top:278.20px;line-height:16px;white-space:pre;"><span style="color:#303942;">.mb-lg-40</span><span style="color:#303942;">, </span><span style="color:#808080;">.my-lg-40</span><span style="color:#303942;">,</span></div><div class="a m" style="right:20px;top:278.20px;line-height:16px;white-space:pre;color:#6e6e6e;text-decoration:underline;text-decoration-color:#a8a8a8">common.8b298ff0.css:1</div><div class="a m" style="left:934.5px;top:292.00px;line-height:16px;white-space:pre;"><span style="color:#808080;">.ma-lg-40 {</span></div><div class="a m" style="left:952px;top:308.10px;line-height:16px;white-space:pre;"><span style="color:#c80000;">margin-bottom</span><span style="color:#222;">: 0.4rem;</span></div><div class="a m" style="left:934.5px;top:321.70px;line-height:16px;white-space:pre;"><span style="color:#808080;">}</span></div><div style="position:absolute;left:930px;top:340.5px;width:306px;height:1px;background:#e6e6e6"></div><div class="a m" style="left:934.5px;top:342.40px;line-height:16px;white-space:pre;"><span style="color:#303942;">@media (min-width: 0)</span></div><div class="a m" style="left:934.5px;top:356.30px;line-height:16px;white-space:pre;"><span style="color:#808080;">.mr-lg-15</span><span style="color:#303942;">, .mx-lg-15,</span></div><div class="a m" style="right:20px;top:356.30px;line-height:16px;white-space:pre;color:#6e6e6e;text-decoration:underline;text-decoration-color:#a8a8a8">common.8b298ff0.css:1</div><div class="a m" style="left:934.5px;top:370.20px;line-height:16px;white-space:pre;"><span style="color:#808080;">.ma-lg-15 {</span></div><div class="a m" style="left:952px;top:386.40px;line-height:16px;white-space:pre;"><span style="color:#c80000;">margin-right</span><span style="color:#222;">: 0.15rem;</span></div><div class="a m" style="left:934.5px;top:400.30px;line-height:16px;white-space:pre;"><span style="color:#808080;">}</span></div><div style="position:absolute;left:930px;top:419.3px;width:306px;height:1px;background:#e6e6e6"></div><div class="a m" style="left:934.5px;top:420.80px;line-height:16px;white-space:pre;"><span style="color:#303942;">@media (min-width: 0)</span></div><div class="a m" style="left:934.5px;top:435.10px;line-height:16px;white-space:pre;"><span style="color:#808080;">.ml-lg-15</span><span style="color:#303942;">, .mx-lg-15,</span></div><div class="a m" style="right:20px;top:435.10px;line-height:16px;white-space:pre;color:#6e6e6e;text-decoration:underline;text-decoration-color:#a8a8a8">common.8b298ff0.css:1</div><div class="a m" style="left:934.5px;top:449.00px;line-height:16px;white-space:pre;"><span style="color:#808080;">.ma-lg-15 {</span></div><div class="a m" style="left:952px;top:465.20px;line-height:16px;white-space:pre;"><span style="color:#c80000;">margin-left</span><span style="color:#222;">: 0.15rem;</span></div><div class="a m" style="left:934.5px;top:478.00px;line-height:16px;white-space:pre;"><span style="color:#808080;">}</span></div><div style="position:absolute;left:930px;top:497.3px;width:306px;height:1px;background:#e6e6e6"></div><div class="a m" style="left:934.5px;top:499.20px;line-height:16px;white-space:pre;"><span style="color:#808080;">*, *:before, *:after {</span></div><div class="a m" style="right:20px;top:499.20px;line-height:16px;white-space:pre;color:#6e6e6e;text-decoration:underline;text-decoration-color:#a8a8a8">common.8b298ff0.css:1</div><div class="a m" style="left:952px;top:515.80px;line-height:16px;white-space:pre;"><span style="color:#c80000;">box-sizing</span><span style="color:#222;">: inherit;</span></div><div class="a m" style="left:934.5px;top:528.50px;line-height:16px;white-space:pre;"><span style="color:#808080;">}</span></div><div style="position:absolute;left:930px;top:548.3px;width:306px;height:1px;background:#e6e6e6"></div><div style="position:absolute;left:930px;top:549px;width:306px;height:50px;background:#f9f9f9"></div><div class="a m" style="left:934.5px;top:550.50px;line-height:16px;white-space:pre;font-style:italic"><span style="color:#303942;">div </span><span style="color:#808080;">{</span></div><div class="a m" style="right:20px;top:550.50px;line-height:16px;white-space:pre;color:#222;font-style:italic">user agent stylesheet</div><div class="a m" style="left:952px;top:567.10px;line-height:16px;white-space:pre;font-style:italic"><span style="color:#c80000;">display</span><span style="color:#222;">: block;</span></div><div class="a m" style="left:934.5px;top:580.70px;line-height:16px;white-space:pre;font-style:italic"><span style="color:#808080;">}</span></div><div style="position:absolute;left:930px;top:599.3px;width:306px;height:1px;background:#e6e6e6"></div><div style="position:absolute;left:930px;top:600px;width:306px;height:23px;background:#f3f3f3"></div><div style="position:absolute;left:935.5px;top:604.00px;line-height:16px;white-space:pre;font-size:12px;color:#666">Inherited from <span style="color:#c80000;margin-left:2px">body</span></div><div style="position:absolute;left:930px;top:623px;width:306px;height:1px;background:#e6e6e6"></div><div class="a m" style="left:934.5px;top:626.00px;line-height:16px;white-space:pre;"><span style="color:#303942;">body </span><span style="color:#808080;">{</span></div><div class="a m" style="right:20px;top:626.00px;line-height:16px;white-space:pre;color:#6e6e6e;text-decoration:underline;text-decoration-color:#a8a8a8">?mg_id=1&amp;from=nav:194</div><div style="position:absolute;left:1236px;top:56px;width:17px;height:585px;background:#f1f1f1"></div><div style="position:absolute;left:1238px;top:73px;width:12.5px;height:267px;background:#c1c1c1"></div><div class="a" style="left:1240px;top:62px;width:0;height:0;border-bottom:4px solid #a0a0a0;border-left:4px solid transparent;border-right:4px solid transparent"></div><div class="a" style="left:1240px;top:630px;width:0;height:0;border-top:4px solid #505050;border-left:4px solid transparent;border-right:4px solid transparent"></div><div style="position:absolute;left:1090px;top:5.5px;width:66px;height:19px;border:1px solid #cbcbcb;border-radius:2px;box-sizing:border-box"></div><svg class="a" style="left:1096px;top:10px" width="11" height="11" viewBox="0 0 11 11"><circle cx="5.5" cy="5.5" r="5.2" fill="#e0353a"/><path d="M3.5 3.5 L7.5 7.5 M7.5 3.5 L3.5 7.5" stroke="#fff" stroke-width="1.3"/></svg><div style="position:absolute;left:1110px;top:7.50px;line-height:16px;white-space:pre;font-size:12px;color:#333">52</div><svg class="a" style="left:1128.5px;top:10px" width="11" height="10.5" viewBox="0 0 11 10.5"><path d="M5.5 0.3 L10.8 10.2 L0.2 10.2 Z" fill="#f2b400"/><path d="M5.5 3.5 V7" stroke="#fff" stroke-width="1.3"/><circle cx="5.5" cy="8.6" r="0.7" fill="#fff"/></svg><div style="position:absolute;left:1143px;top:7.50px;line-height:16px;white-space:pre;font-size:12px;color:#333">1</div><div style="position:absolute;left:1162px;top:7.5px;width:1px;height:15.5px;background:#cbcbcb"></div><svg class="a" style="left:1172px;top:6px" width="18.5" height="18.5" viewBox="0 0 24 24"><path fill="#6e6e6e" d="M19.14 12.94c.04-.3.06-.61.06-.94 0-.32-.02-.64-.07-.94l2.03-1.58a.49.49 0 0 0 .12-.61l-1.92-3.32a.488.488 0 0 0-.59-.22l-2.39.96c-.5-.38-1.03-.7-1.62-.94l-.36-2.54a.484.484 0 0 0-.48-.41h-3.84c-.24 0-.43.17-.47.41l-.36 2.54c-.59.24-1.13.57-1.62.94l-2.39-.96c-.22-.08-.47 0-.59.22L2.74 8.87c-.12.21-.08.47.12.61l2.03 1.58c-.05.3-.09.63-.09.94s.02.64.07.94l-2.03 1.58a.49.49 0 0 0-.12.61l1.92 3.32c.12.22.37.29.59.22l2.39-.96c.5.38 1.03.7 1.62.94l.36 2.54c.05.24.24.41.48.41h3.84c.24 0 .44-.17.47-.41l.36-2.54c.59-.24 1.13-.56 1.62-.94l2.39.96c.22.08.47 0 .59-.22l1.92-3.32c.12-.22.07-.47-.12-.61l-2.01-1.58zM12 15.6c-1.98 0-3.6-1.62-3.6-3.6s1.62-3.6 3.6-3.6 3.6 1.62 3.6 3.6-1.62 3.6-3.6 3.6z"/></svg><div class="a" style="left:1207.7px;top:8.2px;width:3px;height:3px;border-radius:50%;background:#6e6e6e"></div><div class="a" style="left:1207.7px;top:14.2px;width:3px;height:3px;border-radius:50%;background:#6e6e6e"></div><div class="a" style="left:1207.7px;top:20.0px;width:3px;height:3px;border-radius:50%;background:#6e6e6e"></div><svg class="a" style="left:1231px;top:9.5px" width="12" height="12" viewBox="0 0 12 12"><path d="M1.5 1.5 L10.5 10.5 M10.5 1.5 L1.5 10.5" stroke="#6e6e6e" stroke-width="1.4"/></svg><svg class="a" style="left:272px;top:4.5px" width="60" height="23" viewBox="0 0 60 23"><path d="M8.7 16.1 H6.6 Q6 16.1 6 15.5 V6 Q6 5.3 6.6 5.3 H16 Q16.7 5.3 16.7 6 V8.7" fill="none" stroke="#6e6e6e" stroke-width="1.6"/><path d="M10.3 10.3 L17.6 12.6 L15 14 L18.2 17.2 L17 18.4 L13.8 15.2 L12.4 17.8 Z" fill="#6e6e6e"/><path d="M34.9 8.6 V4.4 Q34.9 3.4 35.9 3.4 H44.9 Q45.9 3.4 45.9 4.4 V17.9 Q45.9 18.7 44.9 18.7 H37" fill="none" stroke="#6e6e6e" stroke-width="1.5"/><rect x="32" y="9.2" width="5.8" height="9" rx="0.8" fill="none" stroke="#6e6e6e" stroke-width="1.5"/><rect x="31.3" y="16.8" width="7.2" height="2" fill="#6e6e6e"/></svg><div style="position:absolute;left:329px;top:7px;width:1px;height:15.5px;background:#cbcbcb"></div><div style="position:absolute;left:267px;top:641px;width:987px;height:1px;background:#cdcdcd"></div><div style="position:absolute;left:267px;top:642px;width:987px;height:25px;background:#f3f3f3"></div><div style="position:absolute;left:267px;top:667px;width:987px;height:1px;background:#cdcdcd"></div><div style="position:absolute;left:357px;top:665.5px;width:91px;height:2px;background:#1a73e8"></div><div class="a" style="left:282.5px;top:648.5px;width:2.8px;height:2.8px;border-radius:50%;background:#6e6e6e"></div><div class="a" style="left:282.5px;top:653.3000000000001px;width:2.8px;height:2.8px;border-radius:50%;background:#6e6e6e"></div><div class="a" style="left:282.5px;top:658.1px;width:2.8px;height:2.8px;border-radius:50%;background:#6e6e6e"></div><div style="position:absolute;left:304.6px;top:647.30px;line-height:16px;white-space:pre;font-size:12px;color:#5f6368">Console</div><div style="position:absolute;left:366.6px;top:647.30px;line-height:16px;white-space:pre;font-size:12px;color:#333">What&#x27;s New</div><svg class="a" style="left:435px;top:650.5px" width="9" height="9" viewBox="0 0 9 9"><path d="M1 1 L8 8 M8 1 L1 8" stroke="#6e6e6e" stroke-width="1.3"/></svg><svg class="a" style="left:1231.5px;top:648.5px" width="11" height="11" viewBox="0 0 11 11"><path d="M1 1 L10 10 M10 1 L1 10" stroke="#6e6e6e" stroke-width="1.3"/></svg><div style="position:absolute;left:267px;top:668px;width:987px;height:26px;background:#f3f3f3"></div><div style="position:absolute;left:267px;top:694px;width:987px;height:1px;background:#d6d6d6"></div><div style="position:absolute;left:282.6px;top:674.00px;line-height:16px;white-space:pre;font-size:12px;color:#333">Highlights from the Chrome 89 update</div><div style="position:absolute;left:267px;top:695px;width:969px;height:144px;background:#fff"></div><div style="position:absolute;left:284.8px;top:709.3px;width:565px;height:46.2px;border:1px solid #d9d9d9;box-sizing:border-box;background:#fff"></div><div style="position:absolute;left:294.5px;top:714.30px;line-height:16px;white-space:pre;font-size:14px;color:#1a73e8">Debugging support for Trusted Type violations</div><div style="position:absolute;left:294.5px;top:733.10px;line-height:16px;white-space:pre;font-size:12.9px;color:#80868b">Breakpoint on Trusted Type violations and link to more information in the Issues tab.</div><div style="position:absolute;left:284.8px;top:760.2px;width:565px;height:46.2px;border:1px solid #d9d9d9;box-sizing:border-box;background:#fff"></div><div style="position:absolute;left:294.5px;top:765.30px;line-height:16px;white-space:pre;font-size:14px;color:#1a73e8">Capture node screenshot beyond viewport</div><div style="position:absolute;left:294.5px;top:784.10px;line-height:16px;white-space:pre;font-size:12.9px;color:#80868b">Capture node screenshot for a full node including content below the fold.</div><div style="position:absolute;left:284.8px;top:810.7px;width:565px;height:46.2px;border:1px solid #d9d9d9;box-sizing:border-box;background:#fff"></div><div style="position:absolute;left:294.5px;top:815.80px;line-height:16px;white-space:pre;font-size:14px;color:#1a73e8">New Trust Token tab for network requests</div><div style="position:absolute;left:294.5px;top:834.60px;line-height:16px;white-space:pre;font-size:12.9px;color:#80868b">Display Trust Token requests and results of network requests.</div><div class="a" style="left:898px;top:715px;width:258px;height:124px;overflow:hidden;background:#2f7cf6"><svg width="258" height="124" viewBox="0 0 258 124" style="position:absolute;left:0;top:0"><g stroke="#a8caff" stroke-opacity="0.5" stroke-width="1.1" fill="none"><path d="M0 17 H258 M0 59 H258 M0 88 H258 M63.5 0 V124 M177 0 V124 M0 -5.5 L130 124.5 M127 -5.5 L0 121.5"/><circle cx="63.5" cy="58" r="70" stroke-opacity="0.25"/></g><g stroke="#bcd7ff" stroke-width="2.6" fill="none"><circle cx="65" cy="58" r="95"/><ellipse cx="63.5" cy="59" rx="44.3" ry="42.8"/><ellipse cx="63.5" cy="58.8" rx="32.2" ry="30.8"/><path d="M66 18 H148"/><path d="M0 37 L20 63.7"/><path d="M97 84 L78 124"/></g><rect x="101" y="82" width="51.5" height="31.5" rx="6" fill="#e31919"/><path d="M120.4 90.5 L136 98.25 L120.4 106 Z" fill="#fff"/><text x="177" y="110.8" font-family="Liberation Sans" font-size="29" letter-spacing="1.6" fill="#f2f7ff">new</text><ellipse cx="158" cy="130" rx="13" ry="9.5" fill="#f2f7ff"/><ellipse cx="214" cy="130" rx="14" ry="9.5" fill="#f2f7ff"/></svg></div><div style="position:absolute;left:1236px;top:695px;width:17px;height:144px;background:#f1f1f1"></div><div style="position:absolute;left:1238px;top:712px;width:12.5px;height:36px;background:#c1c1c1"></div><div class="a" style="left:1240.5px;top:701.5px;width:0;height:0;border-bottom:4px solid #a0a0a0;border-left:4px solid transparent;border-right:4px solid transparent"></div><div class="a" style="left:1240.5px;top:828px;width:0;height:0;border-top:4px solid #505050;border-left:4px solid transparent;border-right:4px solid transparent"></div><svg class="a" style="left:1236px;top:752px" width="18" height="49" viewBox="0 0 18 49"><path d="M18 0 H4 Q0 0 0 4 V33 Q0 36 3 37 L18 49 Z" fill="#5b5b5b"/><rect x="4" y="7" width="14" height="19" fill="#0e3a6e"/><circle cx="15" cy="16.5" r="7" fill="#dfe8f5"/><path d="M9 16.5 H18 M11 14 L9 16.5 L11 19" stroke="#0e3a6e" stroke-width="1.5" fill="none"/></svg><div style="position:absolute;left:0px;top:0px;width:1254px;height:1px;background:#fbfbfb"></div><div style="position:absolute;left:0px;top:1px;width:1254px;height:1px;background:#e2e3e5"></div><div style="position:absolute;left:1252.5px;top:0px;width:1.5px;height:839px;background:#5f7fa6"></div><div style="position:absolute;left:0px;top:838.8px;width:1254px;height:0.8px;background:#6a8fb8"></div><div style="position:absolute;left:0px;top:839.5px;width:1254px;height:7px;background:#0b0b0b"></div></body></html>
